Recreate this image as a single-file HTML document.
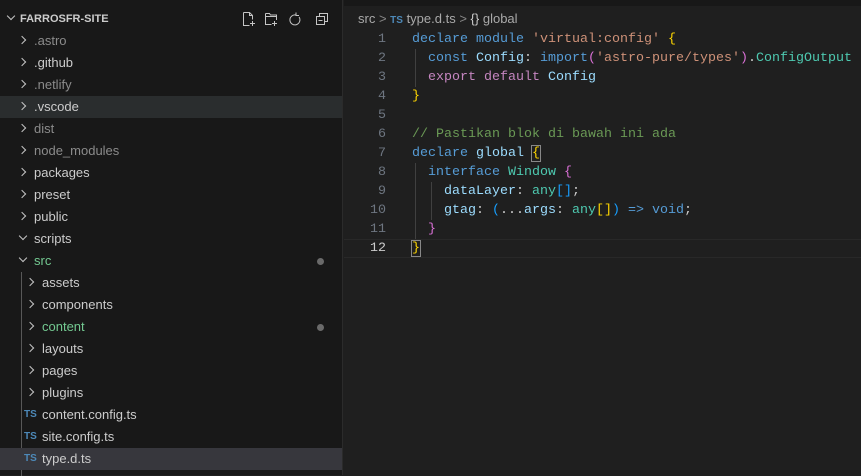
<!DOCTYPE html>
<html><head><meta charset="utf-8"><style>
*{margin:0;padding:0;box-sizing:border-box}
body{width:861px;height:475px;background:#1f1f1f;font-family:"Liberation Sans",sans-serif;overflow:hidden;position:relative;color:#ccc}
#side{position:absolute;left:0;top:0;width:343px;height:475px;background:#181818;border-right:1px solid #2b2b2b}
.row{position:absolute;left:0;width:342px;height:22px;font-size:13px;line-height:22px;color:#cccccc;white-space:nowrap;margin-top:1px}
.row .t{position:absolute}
.chev{position:absolute;top:7px;width:6px;height:6px;border-right:1px solid #c5c5c5;border-bottom:1px solid #c5c5c5;transform:rotate(-45deg)}
.chev.d{transform:rotate(45deg);top:5px}
.ts{position:absolute;font-size:10px;font-weight:bold;color:#4d89b8;top:0}
.dot{position:absolute;left:317px;top:8px;width:7px;height:7px;border-radius:50%;background:#6a6a6a}
#ed{position:absolute;left:344px;top:0;right:0;bottom:0}
.code{font-family:"Liberation Mono",monospace;font-size:13.33px}
.ln{position:absolute;left:0;width:42px;text-align:right;color:#6e7681;font-family:"Liberation Mono",monospace;font-size:13.33px;line-height:19px}
.cl{position:absolute;left:68px;white-space:pre;line-height:19px}
.k{color:#569cd6}.s{color:#ce9178}.v{color:#9cdcfe}.ty{color:#4ec9b0}.f{color:#dcdcaa}.p{color:#c586c0}.c{color:#6a9955}.y{color:#ffd700}.pk{color:#da70d6}.bl{color:#179fff}
</style></head><body>
<div id="side">
 <div class="row" style="top:7px;font-weight:bold;font-size:11px"><span class="chev d" style="left:8px"></span><span class="t" style="left:20px">FARROSFR-SITE</span>
 <svg style="position:absolute;left:241px;top:3px" width="90" height="16" fill="none" stroke="#c5c5c5" stroke-width="1">
  <path d="M2.5 1.5h6l3 3v4M2.5 1.5v13h6M8.5 1.5v3h3M11.5 10v5M9 12.5h5"/>
  <path d="M24.5 2.5h4l1 1.5h6v5M24.5 2.5v11h6M24.5 5.5h11M33.5 10v5M31 12.5h5"/>
  <path d="M55 4a5 5 0 1 0 3 2M55 1.5v3h3"/>
  <path d="M75.5 5.5h8v8h-8zM78.5 5.5v-3h8v8h-3M77.5 9.5h4"/>
 </svg></div>
 <div class="row" style="top:29px;color:#8b8b8b"><span class="chev" style="left:19px"></span><span class="t" style="left:34px">.astro</span></div>
 <div class="row" style="top:51px"><span class="chev" style="left:19px"></span><span class="t" style="left:34px">.github</span></div>
 <div class="row" style="top:73px;color:#8b8b8b"><span class="chev" style="left:19px"></span><span class="t" style="left:34px">.netlify</span></div>
 <div class="row" style="top:95px;background:#2a2d2e"><span class="chev" style="left:19px"></span><span class="t" style="left:34px">.vscode</span></div>
 <div class="row" style="top:117px;color:#8b8b8b"><span class="chev" style="left:19px"></span><span class="t" style="left:34px">dist</span></div>
 <div class="row" style="top:139px;color:#8b8b8b"><span class="chev" style="left:19px"></span><span class="t" style="left:34px">node_modules</span></div>
 <div class="row" style="top:161px"><span class="chev" style="left:19px"></span><span class="t" style="left:34px">packages</span></div>
 <div class="row" style="top:183px"><span class="chev" style="left:19px"></span><span class="t" style="left:34px">preset</span></div>
 <div class="row" style="top:205px"><span class="chev" style="left:19px"></span><span class="t" style="left:34px">public</span></div>
 <div class="row" style="top:227px"><span class="chev d" style="left:20px"></span><span class="t" style="left:34px">scripts</span></div>
 <div class="row" style="top:249px;color:#73c991"><span class="chev d" style="left:20px"></span><span class="t" style="left:34px">src</span><span class="dot"></span></div>
 <div style="position:absolute;left:21px;top:272px;width:1px;height:204px;background:#585858"></div>
 <div class="row" style="top:271px"><span class="chev" style="left:27px"></span><span class="t" style="left:42px">assets</span></div>
 <div class="row" style="top:293px"><span class="chev" style="left:27px"></span><span class="t" style="left:42px">components</span></div>
 <div class="row" style="top:315px;color:#73c991"><span class="chev" style="left:27px"></span><span class="t" style="left:42px">content</span><span class="dot"></span></div>
 <div class="row" style="top:337px"><span class="chev" style="left:27px"></span><span class="t" style="left:42px">layouts</span></div>
 <div class="row" style="top:359px"><span class="chev" style="left:27px"></span><span class="t" style="left:42px">pages</span></div>
 <div class="row" style="top:381px"><span class="chev" style="left:27px"></span><span class="t" style="left:42px">plugins</span></div>
 <div class="row" style="top:403px"><span class="ts" style="left:24px">TS</span><span class="t" style="left:42px">content.config.ts</span></div>
 <div class="row" style="top:425px"><span class="ts" style="left:24px">TS</span><span class="t" style="left:42px">site.config.ts</span></div>
 <div class="row" style="top:447px;background:#37373d"><span class="ts" style="left:24px">TS</span><span class="t" style="left:42px">type.d.ts</span></div>
</div>
<div id="ed">
 <div style="position:absolute;left:0;top:0;right:0;height:6px;background:#181818"></div>
 <div style="position:absolute;left:14px;top:11px;font-size:13px;color:#a9a9a9;white-space:nowrap">src <span style="color:#888">&gt;</span> <span style="color:#4d89b8;font-size:10px;font-weight:bold">TS</span> type.d.ts <span style="color:#888">&gt;</span> <span style="color:#ccc">{}</span> global</div>
 <div style="position:absolute;left:0;right:0;top:239px;height:19px;border-top:1px solid #282828;border-bottom:1px solid #282828"></div>
 <div style="position:absolute;left:71px;top:49px;width:1px;height:38px;background:#404040"></div>
 <div style="position:absolute;left:71px;top:163px;width:1px;height:76px;background:#404040"></div>
 <div style="position:absolute;left:87px;top:182px;width:1px;height:38px;background:#404040"></div>
 <div style="position:absolute;top:30px;left:0;right:0">
  <div class="ln" style="top:0">1</div><div class="ln" style="top:19px">2</div><div class="ln" style="top:38px">3</div><div class="ln" style="top:57px">4</div><div class="ln" style="top:76px">5</div><div class="ln" style="top:95px">6</div><div class="ln" style="top:114px">7</div><div class="ln" style="top:133px">8</div><div class="ln" style="top:152px">9</div><div class="ln" style="top:171px">10</div><div class="ln" style="top:190px">11</div><div class="ln" style="top:209px;color:#ccc">12</div>
  <div class="cl code" style="top:0"><span class="k">declare</span> <span class="k">module</span> <span class="s">'virtual:config'</span> <span class="y">{</span></div>
  <div class="cl code" style="top:19px">  <span class="k">const</span> <span class="v">Config</span>: <span class="k">import</span><span class="pk">(</span><span class="s">'astro-pure/types'</span><span class="pk">)</span>.<span class="ty">ConfigOutput</span></div>
  <div class="cl code" style="top:38px">  <span class="p">export</span> <span class="p">default</span> <span class="v">Config</span></div>
  <div class="cl code" style="top:57px"><span class="y">}</span></div>
  <div class="cl code c" style="top:95px">// Pastikan blok di bawah ini ada</div>
  <div class="cl code" style="top:114px"><span class="k">declare</span> <span class="v">global</span> <span class="y" style="outline:1px solid #888">{</span></div>
  <div class="cl code" style="top:133px">  <span class="k">interface</span> <span class="ty">Window</span> <span class="pk">{</span></div>
  <div class="cl code" style="top:152px">    <span class="v">dataLayer</span>: <span class="ty">any</span><span class="bl">[]</span>;</div>
  <div class="cl code" style="top:171px">    <span class="v">gtag</span>: <span class="bl">(</span>...<span class="v">args</span>: <span class="ty">any</span><span class="y">[]</span><span class="bl">)</span> <span class="k">=&gt;</span> <span class="k">void</span>;</div>
  <div class="cl code" style="top:190px">  <span class="pk">}</span></div>
  <div class="cl code" style="top:209px"><span class="y" style="outline:1px solid #888">}</span></div>
 </div>
</div>
</body></html>
